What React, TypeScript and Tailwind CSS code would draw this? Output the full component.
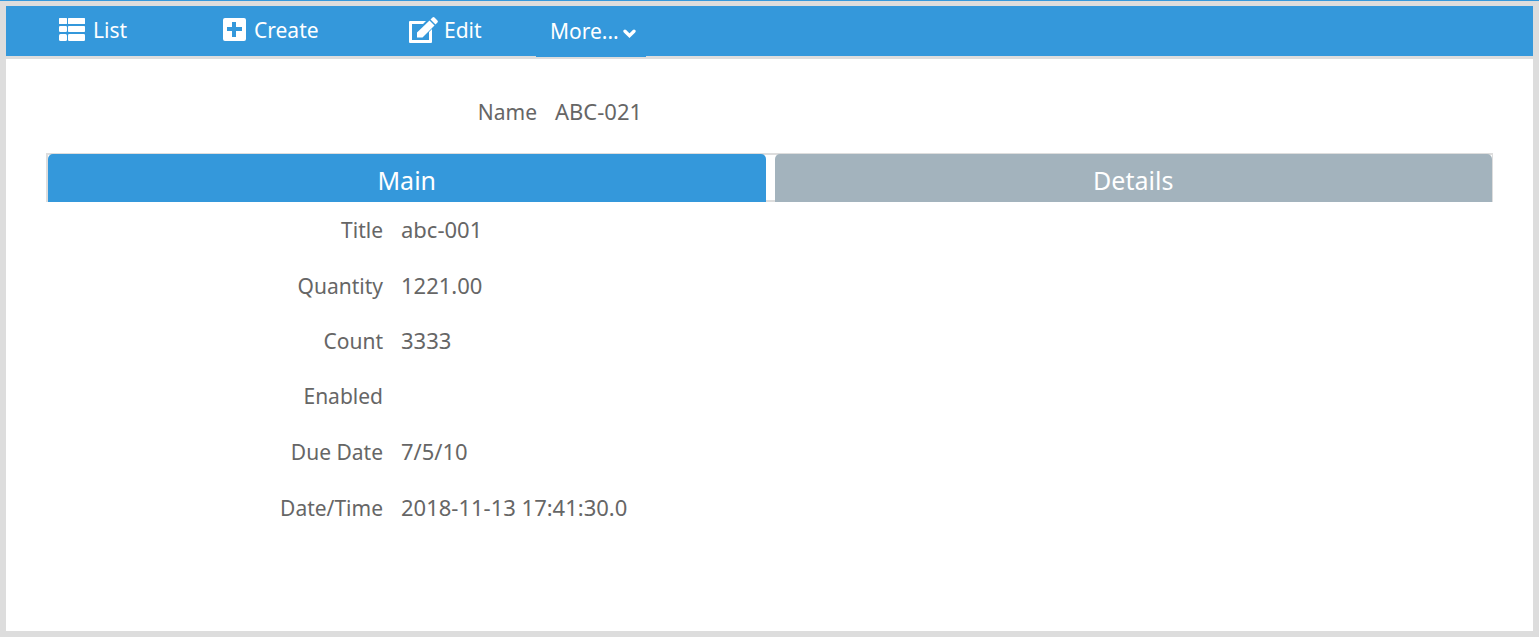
import { useState } from 'react';

const fields = [
  { label: 'Title', value: 'abc-001' },
  { label: 'Quantity', value: '1221.00' },
  { label: 'Count', value: '3333' },
  { label: 'Enabled', value: '' },
  { label: 'Due Date', value: '7/5/10' },
  { label: 'Date/Time', value: '2018-11-13 17:41:30.0' },
];

function ListIcon() {
  return (
    <svg aria-hidden="true" viewBox="0 0 26 23" className="h-[23px] w-[26px] shrink-0" fill="currentColor">
      <rect x="0" y="0" width="8" height="6" rx="0.5" />
      <rect x="9" y="0" width="17" height="6" rx="0.5" />
      <rect x="0" y="8" width="8" height="6" rx="1.2" />
      <rect x="9" y="8" width="17" height="6" rx="0.8" />
      <rect x="0" y="16" width="8" height="7" rx="1.5" />
      <rect x="9" y="16" width="17" height="7" rx="1.2" />
    </svg>
  );
}

function PlusSquareIcon() {
  return (
    <svg aria-hidden="true" viewBox="0 0 23 23" className="h-[23px] w-[23px] shrink-0" fill="currentColor">
      <path
        fillRule="evenodd"
        d="M2 0h19a2 2 0 0 1 2 2v19a2 2 0 0 1-2 2H2a2 2 0 0 1-2-2V2a2 2 0 0 1 2-2zM9 4v5H4v4h5v6h4v-6h6V9h-6V4z"
      />
    </svg>
  );
}

function EditIcon() {
  return (
    <svg aria-hidden="true" viewBox="0 0 29 26" className="h-[26px] w-[29px] shrink-0" fill="currentColor">
      <path d="M1 4h16l-3 3H3v16h17v-8l3-3v13a1 1 0 0 1-1 1H1a1 1 0 0 1-1-1V5a1 1 0 0 1 1-1z" />
      <path d="M20.5 3.5l5 5L13.5 20.500H8v-5z" />
      <path d="M21.5 2.5L23.5.5Q24.500-.3 25.500.6L28.400 3.500Q29.300 4.500 28.400 5.500L26.500 7.500z" />
    </svg>
  );
}

function ChevronIcon() {
  return (
    <svg aria-hidden="true" viewBox="0 0 13 9" className="mt-1 h-[9px] w-[13px] shrink-0" fill="none" stroke="currentColor">
      <path d="M2 2.200l4.500 4.400L11 2.200" strokeWidth="3.300" strokeLinecap="round" />
    </svg>
  );
}

export default function App() {
  const [tab, setTab] = useState('Main');

  return (
    <div className="flex min-h-screen flex-col border-t border-[#3498db] bg-[#ddd] px-1.5 pt-[5px] pb-1.5 font-['Noto_Sans','Open_Sans',sans-serif] text-[22px] leading-7 text-[#666]">
      <nav className="flex h-[50px] shrink-0 bg-[#3498db] pl-[53px] text-[21px] text-white">
        <a href="#list" className="flex w-[164px] items-center gap-2 pb-[3px]">
          <ListIcon />
          List
        </a>
        <a href="#create" className="flex w-[186px] items-center gap-2 pb-[3px]">
          <PlusSquareIcon />
          Create
        </a>
        <a href="#edit" className="flex w-[127px] items-center gap-1.5 pb-[3px]">
          <EditIcon />
          Edit
        </a>
        <button type="button" className="flex h-[51px] w-[110px] items-center gap-1 bg-[#3498db] pb-px pl-3.5">
          More...
          <ChevronIcon />
        </button>
      </nav>

      <main className="mt-[3px] grow bg-white px-10 pt-[38px]">
        <dl className="grid grid-cols-[491px_1fr] items-baseline gap-x-[18px]">
          <dt className="text-right text-[21px]">Name</dt>
          <dd>ABC-021</dd>
        </dl>

        <div
          role="tablist"
          className="mt-[27px] flex h-[49px] border-t border-r border-l-2 border-[#ddd] shadow-[inset_0_-2px_0_#ddd,inset_0_1px_0_#ddd]"
        >
          {['Main', 'Details'].map((name) => (
            <button
              key={name}
              type="button"
              role="tab"
              aria-selected={tab === name}
              onClick={() => setTab(name)}
              className={`flex-1 rounded-t-[5px] pt-1 text-[25px] leading-8 text-white first:mr-[9px] ${
                tab === name ? 'bg-[#3498db]' : 'bg-[#a3b3bd]'
              }`}
            >
              {name}
            </button>
          ))}
        </div>

        <dl role="tabpanel" className="grid h-[333px] grid-rows-6">
          {fields.map(({ label, value }) => (
            <div key={label} className="grid grid-cols-[337px_1fr] content-center items-baseline gap-x-[18px]">
              <dt className="text-right text-[21px]">{label}</dt>
              <dd>{value}</dd>
            </div>
          ))}
        </dl>
      </main>
    </div>
  );
}
